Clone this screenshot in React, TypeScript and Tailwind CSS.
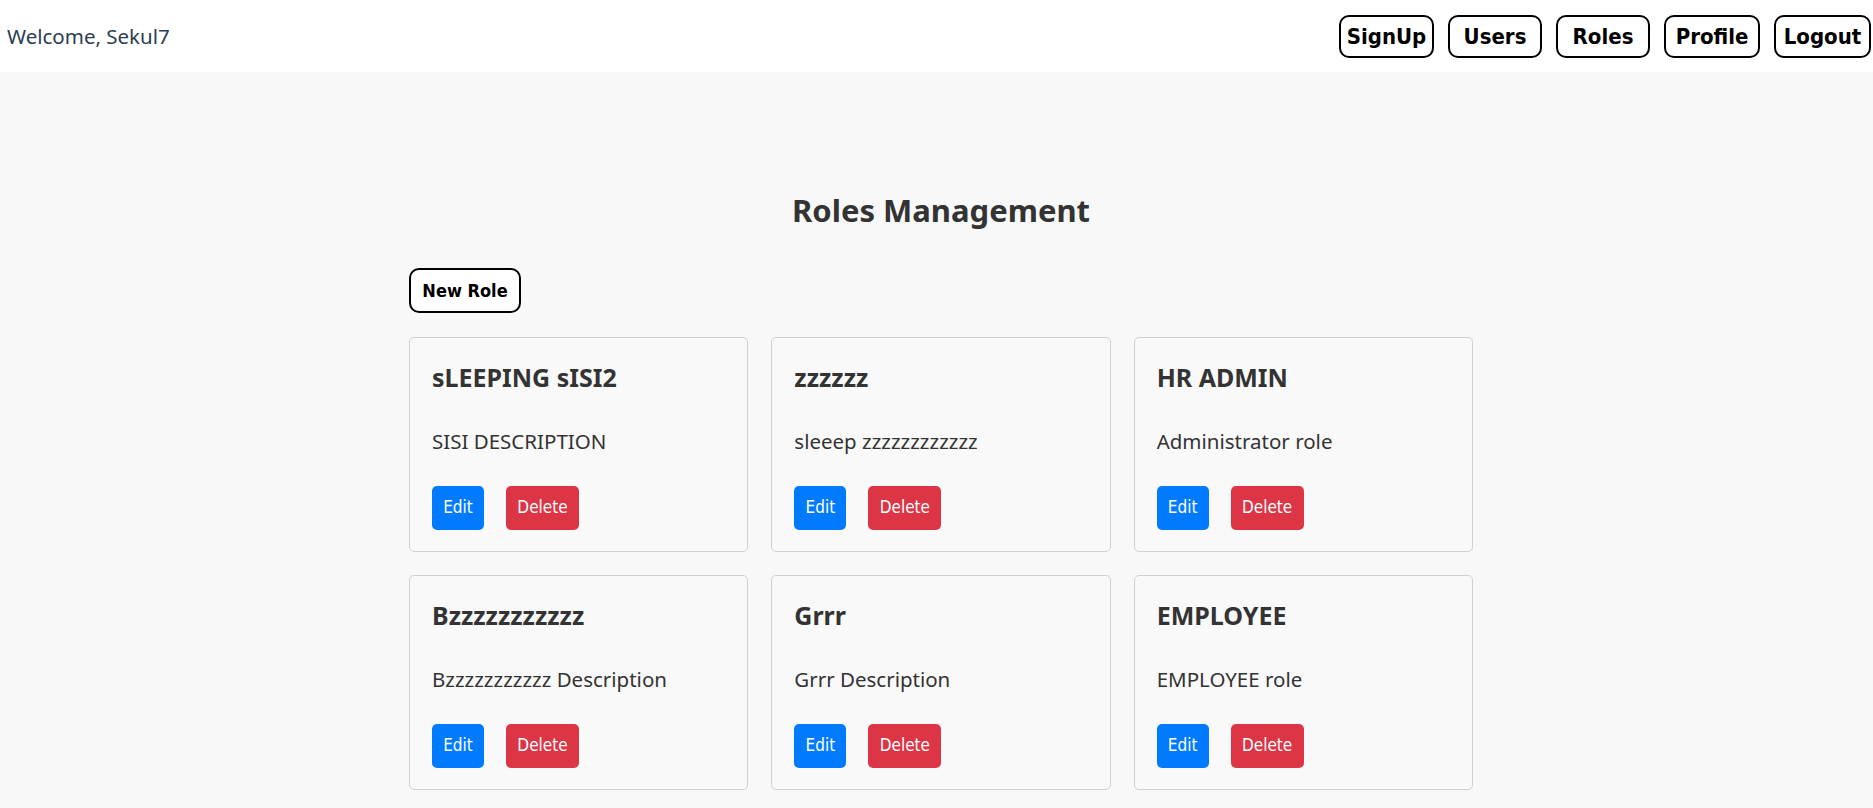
import React from 'react';

type Role = { name: string; description: string };

const roles: Role[] = [
  { name: 'sLEEPING sISI2', description: 'SISI DESCRIPTION' },
  { name: 'zzzzzz', description: 'sleeep zzzzzzzzzzzz' },
  { name: 'HR ADMIN', description: 'Administrator role' },
  { name: 'Bzzzzzzzzzzz', description: 'Bzzzzzzzzzzz Description' },
  { name: 'Grrr', description: 'Grrr Description' },
  { name: 'EMPLOYEE', description: 'EMPLOYEE role' },
];

const navLinks = [
  { label: 'SignUp', width: 'w-[95px]' },
  { label: 'Users', width: 'w-[94px]' },
  { label: 'Roles', width: 'w-[94px]' },
  { label: 'Profile', width: 'w-[96px]' },
  { label: 'Logout', width: 'w-[97px]' },
];

const btnFont = "font-['DejaVu_Sans_Condensed','DejaVu_Sans',sans-serif]";

function Header() {
  return (
    <header className="flex h-[72px] items-center justify-between bg-white pl-[7px] pr-[2px]">
      <span className="text-[20.5px] text-[#2c3e50]">Welcome, Sekul7</span>
      <nav className="flex items-center gap-[14px]">
        {navLinks.map((link) => (
          <button
            key={link.label}
            className={`${link.width} ${btnFont} h-[43px] rounded-[10px] border-2 border-black bg-white text-[22px] font-bold text-black`}
          >
            {link.label}
          </button>
        ))}
      </nav>
    </header>
  );
}

function RoleCard({ role }: { role: Role }) {
  return (
    <div className="rounded-[5px] border border-[#d0d0d0] bg-[#f9f9f9] px-[22px] pt-[23px] pb-[21px]">
      <h3 className="text-[25px] leading-[32px] font-bold text-[#333]">{role.name}</h3>
      <p className="mt-[34px] text-[20.5px] leading-[28px] text-[#333]">{role.description}</p>
      <div className="mt-[31px] flex gap-[22px]">
        <button className={`${btnFont} h-[44px] w-[52px] rounded-[5px] bg-[#007bff] text-[17px] text-white`}>
          Edit
        </button>
        <button className={`${btnFont} h-[44px] w-[73px] rounded-[5px] bg-[#dc3545] text-[17px] text-white`}>
          Delete
        </button>
      </div>
    </div>
  );
}

export default function App() {
  return (
    <div className="min-h-screen bg-[#f8f8f8] font-['Noto_Sans',sans-serif]">
      <Header />
      <main className="flex justify-center pl-[9px] pt-[118px] pb-10">
        <div className="w-[1064px]">
          <h2 className="text-center text-[31px] leading-[40px] font-bold text-[#333]">Roles Management</h2>
          <button className={`${btnFont} mt-[38px] h-[45px] w-[112px] rounded-[10px] border-2 border-black bg-white text-[18px] font-bold text-black`}>
            New Role
          </button>
          <div className="mt-[24px] grid grid-cols-3 gap-[23px]">
            {roles.map((role) => (
              <RoleCard key={role.name} role={role} />
            ))}
          </div>
        </div>
      </main>
    </div>
  );
}
